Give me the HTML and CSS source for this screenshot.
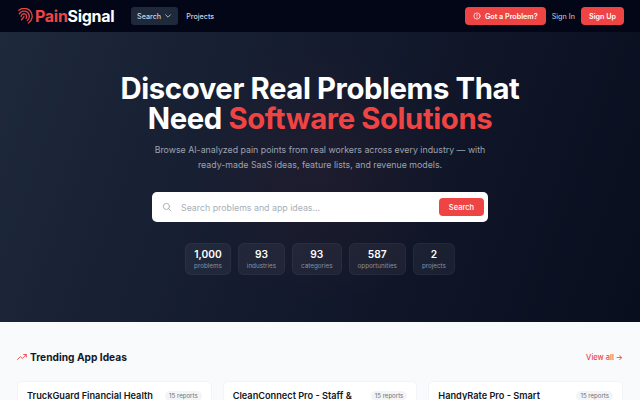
FILE: index.html
```html
<!DOCTYPE html>
<html lang="en">
<head>
<meta charset="utf-8">
<title>PainSignal</title>
<link rel="stylesheet" href="styles.css">
</head>
<body>
<header class="nav">
  <a class="logo">
    <svg class="logo-icon" viewBox="0 0 16 16" fill="none" stroke="#ef4444" stroke-width="1.2" stroke-linecap="round">
      <path d="M1.7 2.25A7.5 7.5 0 1 1 10.8 14.1"/>
      <path d="M2.2 5.5A5 5 0 1 1 9.7 11.8"/>
      <path d="M3.9 8A2.6 2.6 0 1 1 8.5 9.7"/>
      <path d="M4.2 11.2 6.6 8.2"/>
    </svg>
    <span class="logo-text"><span class="logo-red">Pain</span>Signal</span>
  </a>
  <nav class="nav-links">
    <a class="nav-pill">Search
      <svg class="chev" viewBox="0 0 10 10" fill="none" stroke="currentColor" stroke-width="1" stroke-linecap="round" stroke-linejoin="round"><path d="M2 3.5 5 6.5 8 3.5"/></svg>
    </a>
    <a class="nav-link">Projects</a>
  </nav>
  <div class="nav-right">
    <a class="btn btn-problem">
      <svg class="info" viewBox="0 0 10 10" fill="none" stroke="currentColor" stroke-width=".9" stroke-linecap="round"><circle cx="5" cy="5" r="3.9"/><path d="M5 3v2.2M5 6.9v.01"/></svg>
      Got a Problem?
    </a>
    <a class="nav-signin">Sign In</a>
    <a class="btn btn-signup">Sign Up</a>
  </div>
</header>

<section class="hero">
  <h1 class="hero-title">Discover Real Problems That<br>Need <span class="hero-red">Software Solutions</span></h1>
  <p class="hero-sub">Browse AI-analyzed pain points from real workers across every industry — with<br>ready-made SaaS ideas, feature lists, and revenue models.</p>
  <form class="search">
    <svg class="search-icon" viewBox="0 0 12 12" fill="none" stroke="#9ca3af" stroke-width="1" stroke-linecap="round"><circle cx="5.3" cy="5.3" r="3.7"/><path d="M8 8l2.6 2.6"/></svg>
    <span class="search-ph">Search problems and app ideas...</span>
    <a class="search-btn">Search</a>
  </form>
  <div class="stats">
    <div class="stat"><b class="stat-num">1,000</b><span class="stat-label">problems</span></div>
    <div class="stat"><b class="stat-num">93</b><span class="stat-label">industries</span></div>
    <div class="stat"><b class="stat-num">93</b><span class="stat-label">categories</span></div>
    <div class="stat"><b class="stat-num">587</b><span class="stat-label">opportunities</span></div>
    <div class="stat"><b class="stat-num">2</b><span class="stat-label">projects</span></div>
  </div>
</section>

<main class="trending">
  <div class="trend-head">
    <h2 class="trend-title">
      <svg class="trend-icon" viewBox="0 0 12 12" fill="none" stroke="#ef4444" stroke-width="1.1" stroke-linecap="round" stroke-linejoin="round"><path d="M.6 9 4 5.6 6.4 7.8 11 3.2M8 3h3.2v3"/></svg>
      Trending App Ideas
    </h2>
    <a class="view-all">View all →</a>
  </div>
  <div class="cards">
    <article class="card"><h3 class="card-title">TruckGuard Financial Health</h3><span class="badge">15 reports</span></article>
    <article class="card"><h3 class="card-title">CleanConnect Pro - Staff &amp;</h3><span class="badge">15 reports</span></article>
    <article class="card"><h3 class="card-title">HandyRate Pro - Smart</h3><span class="badge">15 reports</span></article>
  </div>
</main>
</body>
</html>
```
FILE: styles.css
```css
* { box-sizing: border-box; }
html, body { margin: 0; height: 400px; overflow: hidden; }
body { font-family: Inter, "Liberation Sans", sans-serif; background: #f8fafc; color: #111827; }
a { text-decoration: none; color: inherit; }

.nav { height: 32px; background: #020617; display: flex; align-items: center; padding: 0 16px 0 17px; }
.logo { display: flex; align-items: center; gap: 1px; width: 114px; }
.logo-icon { width: 17px; height: 17px; }
.logo-text { font-size: 16px; font-weight: 700; color: #fff; letter-spacing: -0.3px; }
.logo-red { color: #ef4444; }
.nav-links { display: flex; align-items: center; gap: 8px; font-size: 7.2px; font-weight: 500; color: #cbd5e1; }
.nav-pill { display: flex; align-items: center; gap: 3px; height: 18px; padding: 0 6px; background: #1e293b; border-radius: 3px; }
.chev { width: 8px; height: 8px; }
.nav-right { margin-left: auto; display: flex; align-items: center; gap: 6px; font-size: 7.2px; font-weight: 400; color: #cbd5e1; }
.btn { display: flex; align-items: center; height: 18px; background: #ef4444; color: #fff; border-radius: 4px; font-weight: 600; }
.btn-problem { gap: 4px; padding: 0 8px; }
.info { width: 8px; height: 8px; }
.btn-signup { padding: 0 8px; }

.hero { height: 290px; padding-top: 42px; display: flex; flex-direction: column; align-items: center; background: radial-gradient(circle at 50% 48%, rgba(239,68,68,.05), rgba(239,68,68,0) 38%), linear-gradient(110deg, #1e293b 0%, #141b2e 45%, #090e1e 100%); }
.hero-title { margin: 0; font-size: 29.3px; line-height: 30px; font-weight: 700; text-align: center; color: #fff; letter-spacing: -0.4px; }
.hero-red { color: #ef4444; }
.hero-sub { margin: 8px 0 0; font-size: 8.8px; line-height: 15px; text-align: center; color: #9ca3af; }
.search { margin-top: 20px; width: 336px; height: 30px; background: #fff; border-radius: 5px; display: flex; align-items: center; padding: 0 4px 0 10px; }
.search-icon { width: 10px; height: 10px; }
.search-ph { margin-left: 9px; font-size: 8.8px; color: #a8afba; }
.search-btn { margin-left: auto; height: 18px; padding: 0 10px; display: flex; align-items: center; background: #ef4444; color: #fff; border-radius: 4px; font-size: 7.5px; font-weight: 500; }
.stats { margin-top: 21px; display: flex; gap: 7px; }
.stat { height: 32px; padding: 0 8px; display: flex; flex-direction: column; align-items: center; justify-content: center; gap: 2px; background: rgba(255,255,255,.05); border: 1px solid rgba(255,255,255,.04); border-radius: 6px; }
.stat-num { font-size: 10.2px; line-height: 12px; font-weight: 600; color: #fff; }
.stat-label { font-size: 6.3px; line-height: 9px; color: #8b93a1; }

.trending { padding: 29px 17px 0 17px; }
.trend-head { display: flex; align-items: center; justify-content: space-between; }
.trend-title { margin: 0; display: flex; align-items: center; gap: 3px; font-size: 10.2px; font-weight: 700; color: #111827; }
.trend-icon { width: 10px; height: 10px; }
.view-all { font-size: 7.5px; font-weight: 500; color: #ef4444; }
.cards { margin-top: 18px; display: grid; grid-template-columns: repeat(3, 1fr); gap: 11px; }
.card { height: 80px; padding: 7px 9px; background: #fff; border: 1px solid #f1f5f9; border-radius: 5px; display: flex; justify-content: space-between; align-items: flex-start; }
.card-title { margin: 0; font-size: 9.2px; line-height: 13px; font-weight: 600; color: #111827; white-space: nowrap; }
.badge { padding: 0 4px; height: 10px; line-height: 10px; border-radius: 5px; background: #f3f4f6; color: #6b7280; font-size: 6.1px; margin-top: 2px; }
```
